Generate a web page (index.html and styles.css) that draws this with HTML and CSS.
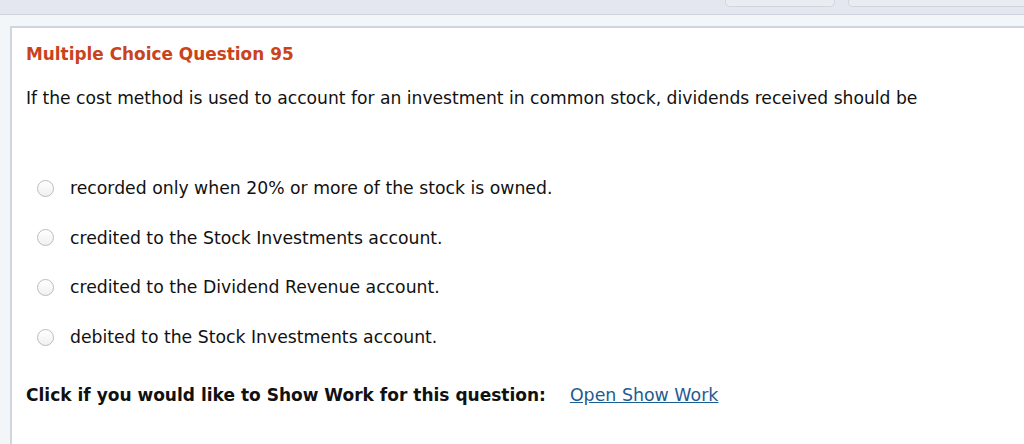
FILE: index.html
```html
<!DOCTYPE html>
<html>
<head>
<meta charset="utf-8">
<link rel="stylesheet" href="styles.css">
</head>
<body>
<div class="topbar">
  <div class="tab tab-a"></div>
  <div class="tab tab-b"></div>
</div>
<div class="stage">
  <div class="panel">
    <h2 class="title">Multiple Choice Question 95</h2>
    <p class="question">If the cost method is used to account for an investment in common stock, dividends received should be</p>
    <ul class="choices">
      <li class="choice"><span class="radio"></span><span class="label">recorded only when 20% or more of the stock is owned.</span></li>
      <li class="choice"><span class="radio"></span><span class="label">credited to the Stock Investments account.</span></li>
      <li class="choice"><span class="radio"></span><span class="label">credited to the Dividend Revenue account.</span></li>
      <li class="choice"><span class="radio"></span><span class="label">debited to the Stock Investments account.</span></li>
    </ul>
    <div class="showwork">
      <span class="sw-label">Click if you would like to Show Work for this question:</span>
      <a class="sw-link" href="#">Open Show Work</a>
    </div>
  </div>
</div>
</body>
</html>
```
FILE: styles.css
```css
html, body {
  margin: 0;
  padding: 0;
  background: #f3f6f9;
  font-family: "DejaVu Sans", Verdana, sans-serif;
  color: #111;
}
body {
  height: 444px;
  overflow: hidden;
}
.topbar {
  height: 14px;
  background: #e4e8ee;
  border-bottom: 1px solid #cdd4de;
  display: flex;
  align-items: flex-start;
  padding-left: 725px;
  gap: 13px;
}
.tab {
  height: 6px;
  background: #e9edf2;
  border: 1px solid #d0d6df;
  border-top: none;
  border-radius: 0 0 5px 5px;
}
.tab-a { width: 108px; }
.tab-b { flex: 1; margin-right: -10px; }
.stage {
  padding: 11px 0 0 10px;
}
.panel {
  background: #fff;
  border-top: 2px solid #cfd5df;
  border-left: 2px solid #cfd5df;
  padding: 16px 0 60px 14px;
}
.title {
  margin: 0;
  font-size: 16.9px;
  font-weight: bold;
  color: #c9431b;
  line-height: 20px;
}
.question {
  margin: 24px 0 0;
  font-size: 17.15px;
  line-height: 20px;
}
.choices {
  list-style: none;
  margin: 70px 0 0;
  padding: 0;
  display: flex;
  flex-direction: column;
  gap: 29.7px;
}
.choice {
  display: flex;
  align-items: center;
  height: 20px;
  font-size: 17.25px;
}
.radio {
  box-sizing: border-box;
  width: 17px;
  height: 17px;
  border-radius: 50%;
  border: 1px solid #b8bcc2;
  background: linear-gradient(#fff, #f0f0f0);
  margin-left: 11px;
  margin-right: 16px;
  flex: none;
}
.label {
  line-height: 20px;
}
.showwork {
  margin-top: 38px;
  line-height: 20px;
  display: flex;
  gap: 24px;
}
.sw-label {
  font-weight: bold;
  font-size: 17.03px;
}
.sw-link {
  font-size: 17.4px;
  color: #1d5c91;
  text-decoration: underline;
}
```
